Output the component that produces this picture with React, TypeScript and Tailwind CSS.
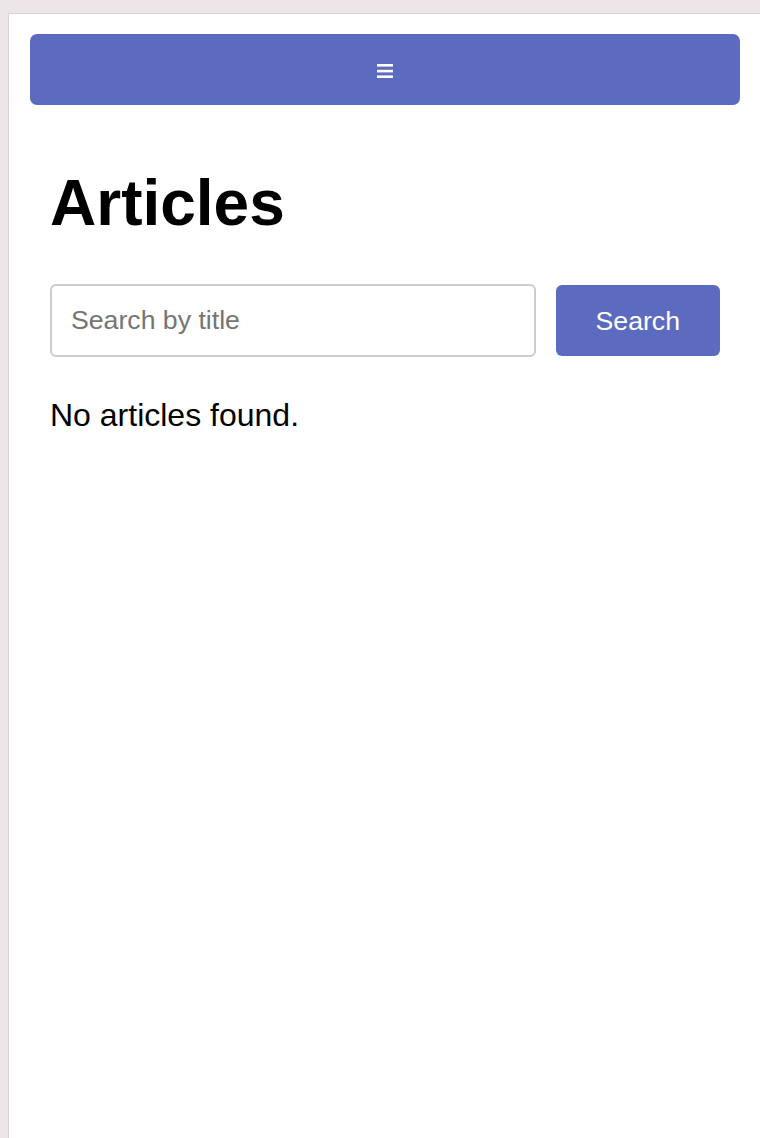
import React from 'react';

const MenuIcon = () => (
  <svg width="16" height="14" viewBox="0 0 16 14" fill="white">
    <rect x="0" y="0" width="16" height="2.6" />
    <rect x="0" y="5.8" width="16" height="2.6" />
    <rect x="0" y="11.4" width="16" height="2.6" />
  </svg>
);

const App = () => {
  return (
    <div
      className="min-h-[1138px] bg-[#ede4e8] pt-[13px] pl-[8px] flex flex-col"
      style={{ fontFamily: '"Liberation Sans", Arial, sans-serif' }}
    >
      <div className="flex-1 bg-white border-l border-t border-[#d9d3d6] pl-[21px] pr-5 pt-5">
        {/* Top bar */}
        <nav className="h-[71px] rounded-[7px] bg-[#5c6bc0] flex items-center justify-center pt-[3px]">
          <button className="flex items-center justify-center" aria-label="Menu">
            <MenuIcon />
          </button>
        </nav>

        <main className="px-5">
          <h1 className="mt-[66px] text-[64px] leading-[64px] font-bold text-black">Articles</h1>

          <div className="mt-[49px] flex items-center gap-5">
            <input
              type="text"
              placeholder="Search by title"
              className="flex-1 min-w-0 h-[73px] border-2 border-[#cccccc] rounded-[6px] px-[19px] text-[26.67px] text-black placeholder:text-[#757575] outline-none"
            />
            <button className="h-[71px] px-10 rounded-md bg-[#5c6bc0] text-white text-[26.67px]">
              Search
            </button>
          </div>

          <p className="mt-[42px] text-[32px] leading-[32px] text-black">No articles found.</p>
        </main>
      </div>
    </div>
  );
};

export default App;
